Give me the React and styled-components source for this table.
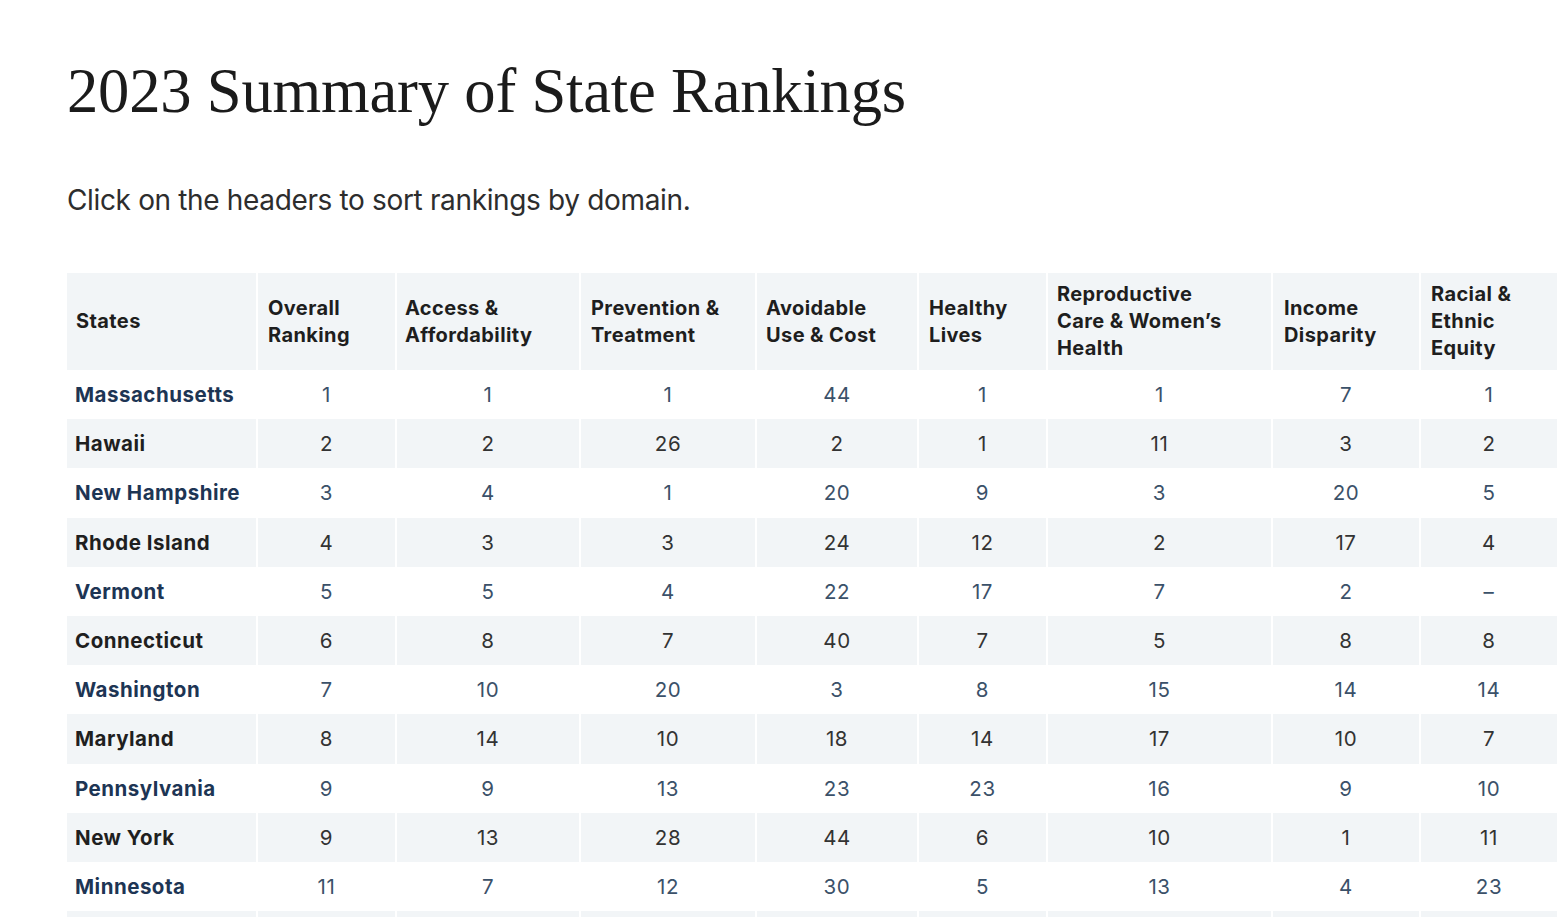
import React from "react";
import styled, { createGlobalStyle } from "styled-components";

const GlobalStyle = createGlobalStyle`
  html, body {
    margin: 0;
    padding: 0;
    background: #ffffff;
    overflow: hidden;
  }
`;

const Page = styled.main`
  padding: 55px 0 0 67px;
  width: 1600px;
`;

const Title = styled.h1`
  margin: 0;
  font-family: "Liberation Serif", "Times New Roman", serif;
  font-weight: 400;
  font-size: 62.6px;
  line-height: 72px;
  color: #1b1b1b;
  letter-spacing: -0.2px;
`;

const Intro = styled.p`
  margin: 55px 0 0;
  font-family: Inter, "Liberation Sans", sans-serif;
  font-size: 28px;
  line-height: 36px;
  color: #2d2d2d;
  letter-spacing: -0.35px;
`;

const Table = styled.table`
  margin-top: 55px;
  border-collapse: collapse;
  table-layout: fixed;
  font-family: Inter, "Liberation Sans", sans-serif;
`;

const HeadCell = styled.th`
  box-sizing: border-box;
  height: 97px;
  padding: 0 8px 0 ${(p) => p.$pad || 10}px;
  background: #f2f5f7;
  border-right: 2px solid #ffffff;
  text-align: left;
  vertical-align: middle;
  font-size: 20px;
  line-height: 27px;
  font-weight: 700;
  color: #1e1e1e;
  letter-spacing: 0.4px;
  cursor: pointer;
`;

const HeadLine = styled.span`
  display: block;
  white-space: nowrap;
`;

const Row = styled.tr`
  background: ${(p) => (p.$shaded ? "#f2f5f7" : "#ffffff")};
`;

const StateCell = styled.td`
  box-sizing: border-box;
  height: 49.2px;
  padding: 0 8px;
  border-right: 2px solid #ffffff;
  font-size: 20.5px;
  font-weight: 700;
  letter-spacing: 0.5px;
  color: ${(p) => (p.$shaded ? "#1f1f1f" : "#1d3554")};
  white-space: nowrap;
`;

const RankCell = styled.td`
  box-sizing: border-box;
  height: 49.2px;
  padding: 0;
  border-right: 2px solid #ffffff;
  text-align: center;
  font-size: 20.5px;
  font-weight: 400;
  letter-spacing: 0.6px;
  color: ${(p) => (p.$shaded ? "#333333" : "#3b5169")};
`;

const columns = [
  { lines: ["States"], width: 190, pad: 9 },
  { lines: ["Overall", "Ranking"], width: 139, pad: 10 },
  { lines: ["Access &", "Affordability"], width: 184, pad: 8 },
  { lines: ["Prevention &", "Treatment"], width: 176, pad: 10 },
  { lines: ["Avoidable", "Use & Cost"], width: 162, pad: 9 },
  { lines: ["Healthy", "Lives"], width: 129, pad: 10 },
  { lines: ["Reproductive", "Care & Women’s", "Health"], width: 225, pad: 9 },
  { lines: ["Income", "Disparity"], width: 148, pad: 11 },
  { lines: ["Racial &", "Ethnic", "Equity"], width: 138, pad: 10 },
  { lines: [], width: 40, pad: 10 },
];

const rows = [
  ["Massachusetts", 1, 1, 1, 44, 1, 1, 7, 1],
  ["Hawaii", 2, 2, 26, 2, 1, 11, 3, 2],
  ["New Hampshire", 3, 4, 1, 20, 9, 3, 20, 5],
  ["Rhode Island", 4, 3, 3, 24, 12, 2, 17, 4],
  ["Vermont", 5, 5, 4, 22, 17, 7, 2, "–"],
  ["Connecticut", 6, 8, 7, 40, 7, 5, 8, 8],
  ["Washington", 7, 10, 20, 3, 8, 15, 14, 14],
  ["Maryland", 8, 14, 10, 18, 14, 17, 10, 7],
  ["Pennsylvania", 9, 9, 13, 23, 23, 16, 9, 10],
  ["New York", 9, 13, 28, 44, 6, 10, 1, 11],
  ["Minnesota", 11, 7, 12, 30, 5, 13, 4, 23],
];

export default function App() {
  return (
    <>
      <GlobalStyle />
      <Page>
        <Title>2023 Summary of State Rankings</Title>
        <Intro>Click on the headers to sort rankings by domain.</Intro>
        <Table>
          <colgroup>
            {columns.map((c, i) => (
              <col key={i} style={{ width: c.width }} />
            ))}
          </colgroup>
          <thead>
            <tr>
              {columns.map((c, i) => (
                <HeadCell key={i} $pad={c.pad}>
                  {c.lines.map((l) => (
                    <HeadLine key={l}>{l}</HeadLine>
                  ))}
                </HeadCell>
              ))}
            </tr>
          </thead>
          <tbody>
            {rows.map((r, i) => {
              const shaded = i % 2 === 1;
              return (
                <Row key={r[0]} $shaded={shaded}>
                  <StateCell $shaded={shaded}>{r[0]}</StateCell>
                  {r.slice(1).map((v, j) => (
                    <RankCell key={j} $shaded={shaded}>
                      {v}
                    </RankCell>
                  ))}
                  <RankCell $shaded={shaded} />
                </Row>
              );
            })}
            <Row $shaded>
              {columns.map((c, i) => (
                <RankCell key={i} $shaded />
              ))}
            </Row>
          </tbody>
        </Table>
      </Page>
    </>
  );
}
